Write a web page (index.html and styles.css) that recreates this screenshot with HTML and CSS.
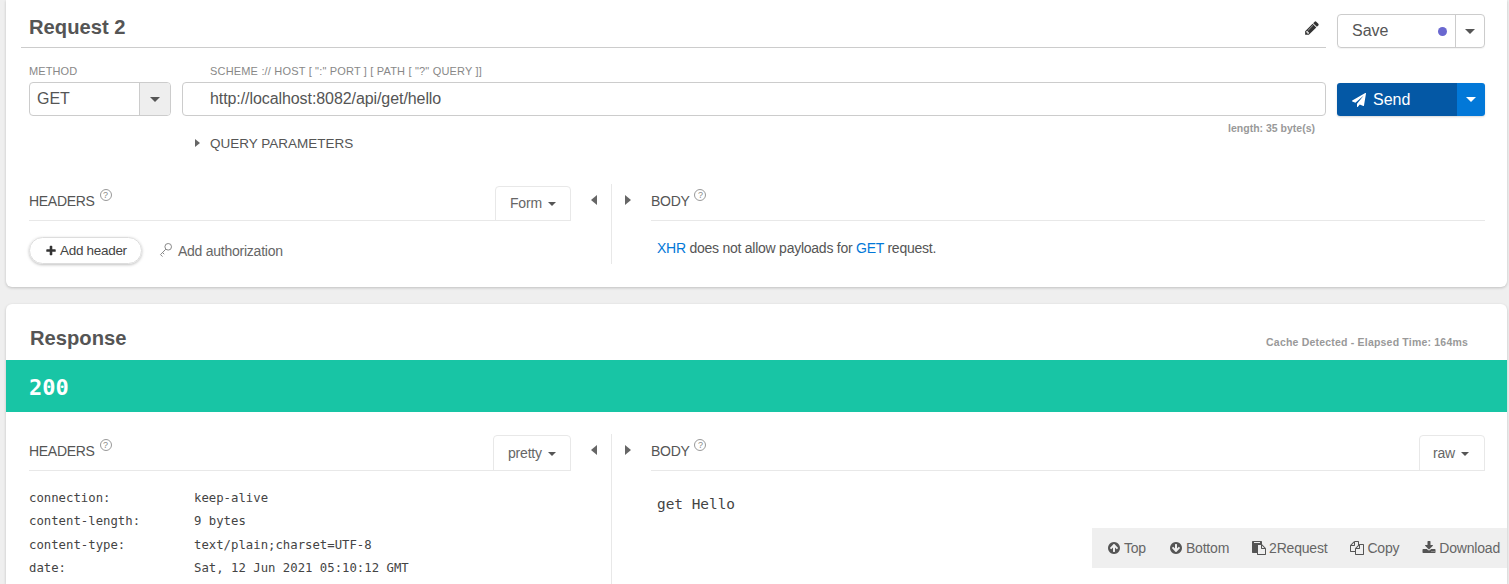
FILE: index.html
```html
<!DOCTYPE html>
<html lang="en">
<head>
<meta charset="utf-8">
<title>Request 2</title>
<link rel="stylesheet" href="styles.css">
</head>
<body>
<section class="card request-card">
  <div class="title-row">
    <div class="title-block">
      <h2 class="title">Request 2</h2>
      <svg class="pencil" viewBox="0 0 1792 1792"><path d="M491 1536l91-91-235-235-91 91v107h128v128h107zm523-928q0-22-22-22-10 0-17 7l-542 542q-7 7-7 17 0 22 22 22 10 0 17-7l542-542q7-7 7-17zm-54-192l416 416-832 832h-416v-416zm683 96q0 53-37 90l-166 166-416-416 166-165q36-38 90-38 53 0 91 38l235 234q37 39 37 91z"/></svg>
    </div>
    <div class="save-group">
      <div class="save-main"><span>Save</span><i class="dot"></i></div>
      <div class="save-caret"><i class="caret caret-dark"></i></div>
    </div>
  </div>
  <div class="form-grid">
    <label class="field-label">METHOD</label>
    <label class="field-label url-label">SCHEME :// HOST [ ":" PORT ] [ PATH [ "?" QUERY ]]</label>
    <span></span>
    <div class="method">
      <span class="method-value">GET</span>
      <span class="method-caret"><i class="caret caret-dark"></i></span>
    </div>
    <div class="url">http://localhost:8082/api/get/hello</div>
    <div class="send-group">
      <div class="send-main">
        <svg class="plane" viewBox="0 0 1792 1792"><path d="M1764 11q33 24 27 64l-256 1536q-5 29-32 45-14 8-31 8-11 0-24-5l-453-185-242 295q-18 23-49 23-13 0-22-4-19-7-30.5-23.5t-11.5-36.5v-349l864-1059-1069 925-395-162q-37-14-40-55-2-40 32-59l1664-960q15-9 32-9 20 0 36 11z"/></svg>
        <span>Send</span>
      </div>
      <div class="send-caret"><i class="caret caret-white"></i></div>
    </div>
    <span></span>
    <div class="length">length: 35 byte(s)</div>
    <span></span>
  </div>
  <div class="query"><i class="tri tri-right"></i><span>QUERY PARAMETERS</span></div>
  <div class="split split-request">
    <div class="pane pane-left">
      <div class="pane-head">
        <span class="pane-title">HEADERS</span><span class="help">?</span>
        <span class="tab tab-form">Form<i class="caret caret-small"></i></span>
      </div>
      <div class="add-row">
        <span class="add-header">
          <svg class="plus" viewBox="0 0 1792 1792"><path d="M1600 736v192q0 40-28 68t-68 28h-416v416q0 40-28 68t-68 28h-192q-40 0-68-28t-28-68v-416h-416q-40 0-68-28t-28-68v-192q0-40 28-68t68-28h416v-416q0-40 28-68t68-28h192q40 0 68 28t28 68v416h416q40 0 68 28t28 68z"/></svg>Add header
        </span>
        <svg class="key" viewBox="0 0 14 16"><circle cx="9.2" cy="4.8" r="3.3"/><path d="M6.8 7.2L1.5 12.6M1.5 12.6l2 2M3.6 10.6l1.6 1.6"/></svg>
        <span class="add-auth">Add authorization</span>
      </div>
    </div>
    <div class="arrows">
      <i class="tri tri-left"></i>
      <i class="divider"></i>
      <i class="tri tri-right"></i>
    </div>
    <div class="pane pane-right">
      <div class="pane-head">
        <span class="pane-title">BODY</span><span class="help">?</span>
      </div>
      <p class="notice"><span class="link">XHR</span> does not allow payloads for <span class="link">GET</span> request.</p>
    </div>
  </div>
</section>

<section class="card response-card">
  <div class="response-head">
    <h2 class="title">Response</h2>
    <span class="elapsed">Cache Detected - Elapsed Time: 164ms</span>
  </div>
  <div class="status">200</div>
  <div class="split split-response">
    <div class="pane pane-left">
      <div class="pane-head">
        <span class="pane-title">HEADERS</span><span class="help">?</span>
        <span class="tab tab-pretty">pretty<i class="caret caret-small"></i></span>
      </div>
      <dl class="resp-headers">
        <dt>connection:</dt><dd>keep-alive</dd>
        <dt>content-length:</dt><dd>9 bytes</dd>
        <dt>content-type:</dt><dd>text/plain;charset=UTF-8</dd>
        <dt>date:</dt><dd>Sat, 12 Jun 2021 05:10:12 GMT</dd>
      </dl>
    </div>
    <div class="arrows">
      <i class="tri tri-left"></i>
      <i class="divider"></i>
      <i class="tri tri-right"></i>
    </div>
    <div class="pane pane-right">
      <div class="pane-head">
        <span class="pane-title">BODY</span><span class="help">?</span>
        <span class="tab tab-raw">raw<i class="caret caret-small"></i></span>
      </div>
      <pre class="resp-body">get Hello</pre>
    </div>
  </div>
  <div class="toolbar">
    <span class="tool"><svg viewBox="0 0 1792 1792"><path d="M1412 895q0-27-18-45l-362-362-91-91q-18-18-45-18t-45 18l-91 91-362 362q-18 18-18 45t18 45l91 91q18 18 45 18t45-18l189-189v502q0 26 19 45t45 19h128q26 0 45-19t19-45v-502l189 189q19 19 45 19t45-19l91-91q18-18 18-45zm252 1q0 209-103 385.5t-279.5 279.5-385.5 103-385.5-103-279.5-279.5-103-385.5 103-385.5 279.5-279.5 385.5-103 385.5 103 279.5 279.5 103 385.5z"/></svg>Top</span>
    <span class="tool"><svg viewBox="0 0 1792 1792"><path d="M1412 897q0-27-18-45l-91-91q-18-18-45-18t-45 18l-189 189v-502q0-26-19-45t-45-19h-128q-26 0-45 19t-19 45v502l-189-189q-19-19-45-19t-45 19l-91 91q-18 18-18 45t18 45l362 362 91 91q18 18 45 18t45-18l91-91 362-362q18-18 18-45zm252-1q0 209-103 385.5t-279.5 279.5-385.5 103-385.5-103-279.5-279.5-103-385.5 103-385.5 279.5-279.5 385.5-103 385.5 103 279.5 279.5 103 385.5z"/></svg>Bottom</span>
    <span class="tool"><svg viewBox="0 0 1792 1792"><path d="M768 1664h896v-640h-416q-40 0-68-28t-28-68v-416h-384v1152zm256-1440v-64q0-13-9.5-22.5t-22.5-9.5h-704q-13 0-22.5 9.5t-9.5 22.5v64q0 13 9.5 22.5t22.5 9.5h704q13 0 22.5-9.5t9.5-22.5zm256 672h299l-299-299v299zm512 128v672q0 40-28 68t-68 28h-960q-40 0-68-28t-28-68v-160h-544q-40 0-68-28t-28-68v-1344q0-40 28-68t68-28h1088q40 0 68 28t28 68v328q21 13 36 28l408 408q28 28 48 76t20 88z"/></svg>2Request</span>
    <span class="tool"><svg viewBox="0 0 1792 1792"><path d="M1696 384q40 0 68 28t28 68v1216q0 40-28 68t-68 28h-960q-40 0-68-28t-28-68v-288h-544q-40 0-68-28t-28-68v-672q0-40 20-88t48-76l408-408q28-28 76-48t88-20h416q40 0 68 28t28 68v328q68-40 128-40h416zm-544 213l-299 299h299v-299zm-640-384l-299 299h299v-299zm196 647l316-316v-416h-384v416q0 40-28 68t-68 28h-416v640h512v-256q0-40 20-88t48-76zm956 804v-1152h-384v416q0 40-28 68t-68 28h-416v640h896z"/></svg>Copy</span>
    <span class="tool"><svg viewBox="0 0 1792 1792"><path d="M1344 1344q0-26-19-45t-45-19-45 19-19 45 19 45 45 19 45-19 19-45zm256 0q0-26-19-45t-45-19-45 19-19 45 19 45 45 19 45-19 19-45zm128-224v320q0 40-28 68t-68 28h-1472q-40 0-68-28t-28-68v-320q0-40 28-68t68-28h465l135 136q58 56 136 56t136-56l136-136h464q40 0 68 28t28 68zm-325-569q17 41-14 70l-448 448q-18 19-45 19t-45-19l-448-448q-31-29-14-70 17-39 59-39h256v-448q0-26 19-45t45-19h256q26 0 45 19t19 45v448h256q42 0 59 39z"/></svg>Download</span>
  </div>
</section>
</body>
</html>
```
FILE: styles.css
```css
* { box-sizing: border-box; }
html, body { margin: 0; height: 100%; overflow: hidden; }
body {
  display: flex;
  flex-direction: column;
  gap: 17px;
  padding: 0 2px 0 6px;
  background: #efefef;
  color: #555;
  font-family: "Liberation Sans", Arial, sans-serif;
  font-size: 14px;
}
i { display: block; }
.card {
  background: #fff;
  border-radius: 0 0 6px 6px;
  box-shadow: 0 1px 3px rgba(0, 0, 0, .2);
}
.request-card { height: 287px; flex: none; }
.response-card { flex: 1; position: relative; border-radius: 6px 6px 0 0; overflow: hidden; min-height: 0; }

.title-row { display: flex; padding: 0 22px 0 15px; height: 48px; }
.title-block {
  flex: 1;
  display: flex;
  align-items: center;
  justify-content: space-between;
  padding: 6px 6px 0 8px;
  border-bottom: 1px solid #ccc;
}
.title { margin: 0; font-size: 20.2px; font-weight: 700; color: #555; line-height: 24px; }
.pencil { width: 16px; height: 16px; fill: #333; margin-top: 2px; }
.save-group {
  display: flex;
  width: 148px;
  height: 34px;
  margin: 14px 0 0 11px;
  border: 1px solid #ccc;
  border-radius: 4px;
  box-shadow: 0 1px 1px rgba(0, 0, 0, .05);
}
.save-main {
  flex: 1;
  display: flex;
  align-items: center;
  justify-content: space-between;
  padding: 0 8px 0 14px;
  font-size: 16px;
  color: #555;
}
.dot { width: 9px; height: 9px; border-radius: 50%; background: #6a68d0; }
.save-caret { width: 29px; display: flex; align-items: center; justify-content: center; border-left: 1px solid #ccc; }

.caret { width: 0; height: 0; border-style: solid; border-color: transparent; border-width: 5px 5px 0; }
.caret-dark { border-top-color: #555; }
.caret-white { border-top-color: #fff; }
.caret-small { display: inline-block; border-width: 4px 4px 0; border-top-color: #555; margin-left: 6px; vertical-align: 2px; }

.form-grid {
  display: grid;
  grid-template-columns: 142px 1fr 148px;
  grid-template-rows: 34px 34px 14px;
  column-gap: 11px;
  padding: 0 22px 0 23px;
}
.field-label { font-size: 11px; letter-spacing: .1px; color: #888; line-height: 14px; padding-top: 16px; white-space: nowrap; }
.url-label { padding-left: 28px; letter-spacing: .18px; }
.method {
  display: flex;
  border: 1px solid #ccc;
  border-radius: 4px;
  font-size: 16px;
  overflow: hidden;
}
.method-value { flex: 1; padding-left: 7px; line-height: 32px; color: #555; }
.method-caret { width: 31px; background: #eee; border-left: 1px solid #ccc; display: flex; align-items: center; justify-content: center; }
.url {
  border: 1px solid #ccc;
  border-radius: 4px;
  padding-left: 27px;
  font-size: 16px;
  letter-spacing: -.08px;
  line-height: 32px;
  color: #555;
}
.send-group { display: flex; margin-top: 1px; height: 33px; border-radius: 3px; overflow: hidden; color: #fff; box-shadow: 0 1px 2px rgba(0, 0, 0, .15); }
.send-main {
  flex: 1;
  display: flex;
  align-items: center;
  padding-left: 15px;
  gap: 7px;
  background: #0458a5;
  font-size: 16px;
}
.plane { width: 14px; height: 14px; fill: #fff; margin-top: 1px; }
.send-caret { width: 28px; background: #0278d8; display: flex; align-items: center; justify-content: center; }
.length { text-align: right; padding: 5px 11px 0 0; font-size: 10.5px; font-weight: 700; color: #999; line-height: 14px; }

.query {
  display: flex;
  align-items: center;
  gap: 10px;
  margin: 3px 0 0 189px;
  height: 20px;
  font-size: 13.5px;
  color: #555;
}
.tri { width: 0; height: 0; border-style: solid; border-color: transparent; }
.tri-right { border-width: 4px 0 4px 5px; border-left-color: #666; }
.tri-left { border-width: 5px 6px 5px 0; border-right-color: #666; }
.arrows .tri-right { border-width: 5px 0 5px 6px; }

.split { display: flex; padding: 0 22px 0 23px; }
.split-request { margin-top: 31px; height: 81px; }
.split-response { height: 172px; margin-top: 21px; }
.pane-left { width: 542px; flex: none; }
.pane-right { flex: 1; }
.pane-head {
  display: flex;
  align-items: center;
  height: 36px;
  border-bottom: 1px solid #e8e8e8;
  font-size: 14px;
}
.split-request .pane-head { margin-top: 1px; }
.split-response .pane-head { margin-top: 2px; }
.pane-title { letter-spacing: -.3px; color: #555; margin-top: -4px; }
.help {
  width: 12px;
  height: 12px;
  margin: -16px 0 0 5px;
  border: 1px solid #999;
  border-radius: 50%;
  font-size: 9px;
  line-height: 10px;
  text-align: center;
  color: #888;
}
.tab {
  margin-left: auto;
  align-self: flex-end;
  margin-bottom: -1px;
  height: 35px;
  padding: 0 7px;
  border: 1px solid #e8e8e8;
  border-radius: 4px 4px 0 0;
  font-size: 14px;
  line-height: 32px;
  color: #666;
  white-space: nowrap;
  letter-spacing: -.2px;
}
.split-response .tab { height: 36px; line-height: 34px; }
.tab-form { width: 76px; padding-left: 14px; }
.tab-pretty { width: 78px; padding-left: 14px; }
.tab-raw { width: 66px; padding-left: 13px; }

.add-row { display: flex; align-items: center; margin-top: 16px; }
.add-header {
  display: flex;
  align-items: center;
  gap: 3px;
  height: 27px;
  padding: 0 15px;
  width: 113px;
  border: 1px solid #ddd;
  border-radius: 14px;
  box-shadow: 0 1px 3px rgba(0, 0, 0, .25);
  font-size: 13.5px;
  letter-spacing: -.3px;
  color: #444;
  white-space: nowrap;
}
.plus { width: 12px; height: 12px; fill: #333; flex: none; }
.key { width: 14px; height: 16px; margin: -2px 0 0 17px; fill: none; stroke: #888; stroke-width: 1; }
.add-auth { margin-left: 5px; color: #666; letter-spacing: -.25px; }

.arrows {
  width: 80px;
  flex: none;
  display: grid;
  grid-template-columns: 40px 1px 39px;
}
.arrows .divider { background: #e8e8e8; grid-column: 2; grid-row: 1; }
.arrows .tri-left { grid-column: 1; grid-row: 1; margin: 11px 0 0 20px; }
.arrows .tri-right { grid-column: 3; grid-row: 1; margin: 11px 0 0 13px; }
.split-request .arrows { height: 80px; }
.split-response .arrows { height: 200px; margin-top: 1px; }
.notice { margin: 19px 0 0 6px; font-size: 14px; letter-spacing: -.25px; color: #555; }
.link { color: #0278d8; }

.response-head { display: flex; align-items: flex-end; justify-content: space-between; height: 56px; padding: 0 39px 10px 24px; }
.elapsed { font-size: 10.5px; letter-spacing: .2px; font-weight: 700; color: #999; padding-bottom: 1px; line-height: 14px; }
.status {
  height: 52px;
  background: #18c5a5;
  padding-left: 23px;
  font-family: "DejaVu Sans Mono", monospace;
  font-size: 22px;
  font-weight: 700;
  line-height: 56px;
  color: #fff;
}
.resp-headers {
  display: grid;
  grid-template-columns: 165px 1fr;
  grid-auto-rows: 23.3px;
  margin: 16px 0 0;
  font-family: "DejaVu Sans Mono", monospace;
  font-size: 12.3px;
  line-height: 23px;
  color: #444;
}
.resp-headers dt, .resp-headers dd { margin: 0; white-space: nowrap; }
.resp-body { margin: 23px 0 0 6px; font-family: "DejaVu Sans Mono", monospace; font-size: 14.4px; line-height: 20px; color: #444; }

.toolbar {
  position: absolute;
  right: 0;
  top: 224px;
  width: 415px;
  height: 40px;
  display: flex;
  align-items: center;
  justify-content: flex-end;
  gap: 23px;
  padding-right: 7px;
  background: #efefef;
  font-size: 14px;
  color: #666;
  letter-spacing: -.2px;
}
.tool { display: flex; align-items: center; gap: 3px; white-space: nowrap; }
.tool svg { width: 14px; height: 14px; fill: #555; flex: none; }
```
